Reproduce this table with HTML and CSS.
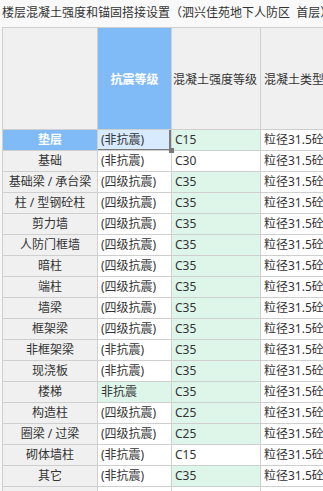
FILE: index.html
```html
<!DOCTYPE html>
<html lang="zh">
<head>
<meta charset="utf-8">
<link rel="stylesheet" href="styles.css">
</head>
<body>
<div class="title">楼层混凝土强度和锚固搭接设置（泗兴佳苑地下人防区&nbsp;&nbsp;首层）</div>
<div class="sheet">
  <div class="grid">
    <div class="hd corner"></div>
    <div class="hd sel">抗震等级</div>
    <div class="hd">混凝土强度等级</div>
    <div class="hd">混凝土类型</div>

    <div class="rh sel">垫层</div><div class="c active">(非抗震)<span class="handle"></span></div><div class="c g">C15</div><div class="c">粒径31.5砼</div>
    <div class="rh">基础</div><div class="c">(非抗震)</div><div class="c">C30</div><div class="c">粒径31.5砼</div>
    <div class="rh">基础梁 / 承台梁</div><div class="c">(四级抗震)</div><div class="c g">C35</div><div class="c">粒径31.5砼</div>
    <div class="rh">柱 / 型钢砼柱</div><div class="c">(四级抗震)</div><div class="c g">C35</div><div class="c">粒径31.5砼</div>
    <div class="rh">剪力墙</div><div class="c">(四级抗震)</div><div class="c g">C35</div><div class="c">粒径31.5砼</div>
    <div class="rh">人防门框墙</div><div class="c">(四级抗震)</div><div class="c g">C35</div><div class="c">粒径31.5砼</div>
    <div class="rh">暗柱</div><div class="c">(四级抗震)</div><div class="c g">C35</div><div class="c">粒径31.5砼</div>
    <div class="rh">端柱</div><div class="c">(四级抗震)</div><div class="c g">C35</div><div class="c">粒径31.5砼</div>
    <div class="rh">墙梁</div><div class="c">(四级抗震)</div><div class="c g">C35</div><div class="c">粒径31.5砼</div>
    <div class="rh">框架梁</div><div class="c">(四级抗震)</div><div class="c g">C35</div><div class="c">粒径31.5砼</div>
    <div class="rh">非框架梁</div><div class="c">(非抗震)</div><div class="c g">C35</div><div class="c">粒径31.5砼</div>
    <div class="rh">现浇板</div><div class="c">(非抗震)</div><div class="c g">C35</div><div class="c">粒径31.5砼</div>
    <div class="rh">楼梯</div><div class="c g">非抗震</div><div class="c g">C35</div><div class="c">粒径31.5砼</div>
    <div class="rh">构造柱</div><div class="c">(四级抗震)</div><div class="c g">C25</div><div class="c">粒径31.5砼</div>
    <div class="rh">圈梁 / 过梁</div><div class="c">(四级抗震)</div><div class="c g">C25</div><div class="c">粒径31.5砼</div>
    <div class="rh">砌体墙柱</div><div class="c">(非抗震)</div><div class="c">C15</div><div class="c">粒径31.5砼</div>
    <div class="rh">其它</div><div class="c">(非抗震)</div><div class="c g">C35</div><div class="c">粒径31.5砼</div>
    <div class="rh"></div><div class="c"></div><div class="c"></div><div class="c"></div>
  </div>
</div>
</body>
</html>
```
FILE: styles.css
```css
html, body {
  margin: 0;
  padding: 0;
}
body {
  width: 323px;
  height: 491px;
  overflow: hidden;
  background: #f7f7f7;
  font-family: "Noto Sans", "Noto Sans CJK SC", sans-serif;
  font-size: 12px;
  color: #333;
}
.title {
  height: 27px;
  line-height: 26px;
  padding-left: 2px;
  white-space: nowrap;
  overflow: hidden;
  color: #333;
  background: #f9f9f9;
}
.sheet {
  padding-left: 2px;
  overflow: hidden;
  height: 464px;
}
.grid {
  display: grid;
  grid-template-columns: 94px 73px 88px 130px;
  grid-template-rows: 101px repeat(18, 20px);
  gap: 1px;
  padding: 1px;
  background: #cfcfcf;
  width: max-content;
}
.hd {
  background: #f0f0f0;
  display: flex;
  align-items: center;
  justify-content: center;
  white-space: nowrap;
  overflow: hidden;
}
.hd:nth-child(3) {
  justify-content: flex-start;
  padding-left: 1px;
}
.hd:nth-child(4) {
  justify-content: flex-start;
  padding-left: 3px;
}
.hd.sel {
  background: #80bbf7;
  color: #fff;
  font-weight: 600;
}
.rh {
  background: #f0f0f0;
  text-align: center;
  line-height: 20px;
  white-space: nowrap;
}
.rh.sel {
  background: #80bbf7;
  color: #fff;
  font-weight: 600;
}
.c {
  background: #fff;
  line-height: 20px;
  padding-left: 3px;
  white-space: nowrap;
  overflow: hidden;
}
.c.g {
  background: #def5ea;
}
.c.active {
  background: #d8eafd;
  position: relative;
  overflow: visible;
  box-shadow: inset -2px -1px 0 #7a7a7a;
}
.handle {
  position: absolute;
  right: -3px;
  bottom: -3px;
  width: 5px;
  height: 5px;
  background: #7a7a7a;
}
```
